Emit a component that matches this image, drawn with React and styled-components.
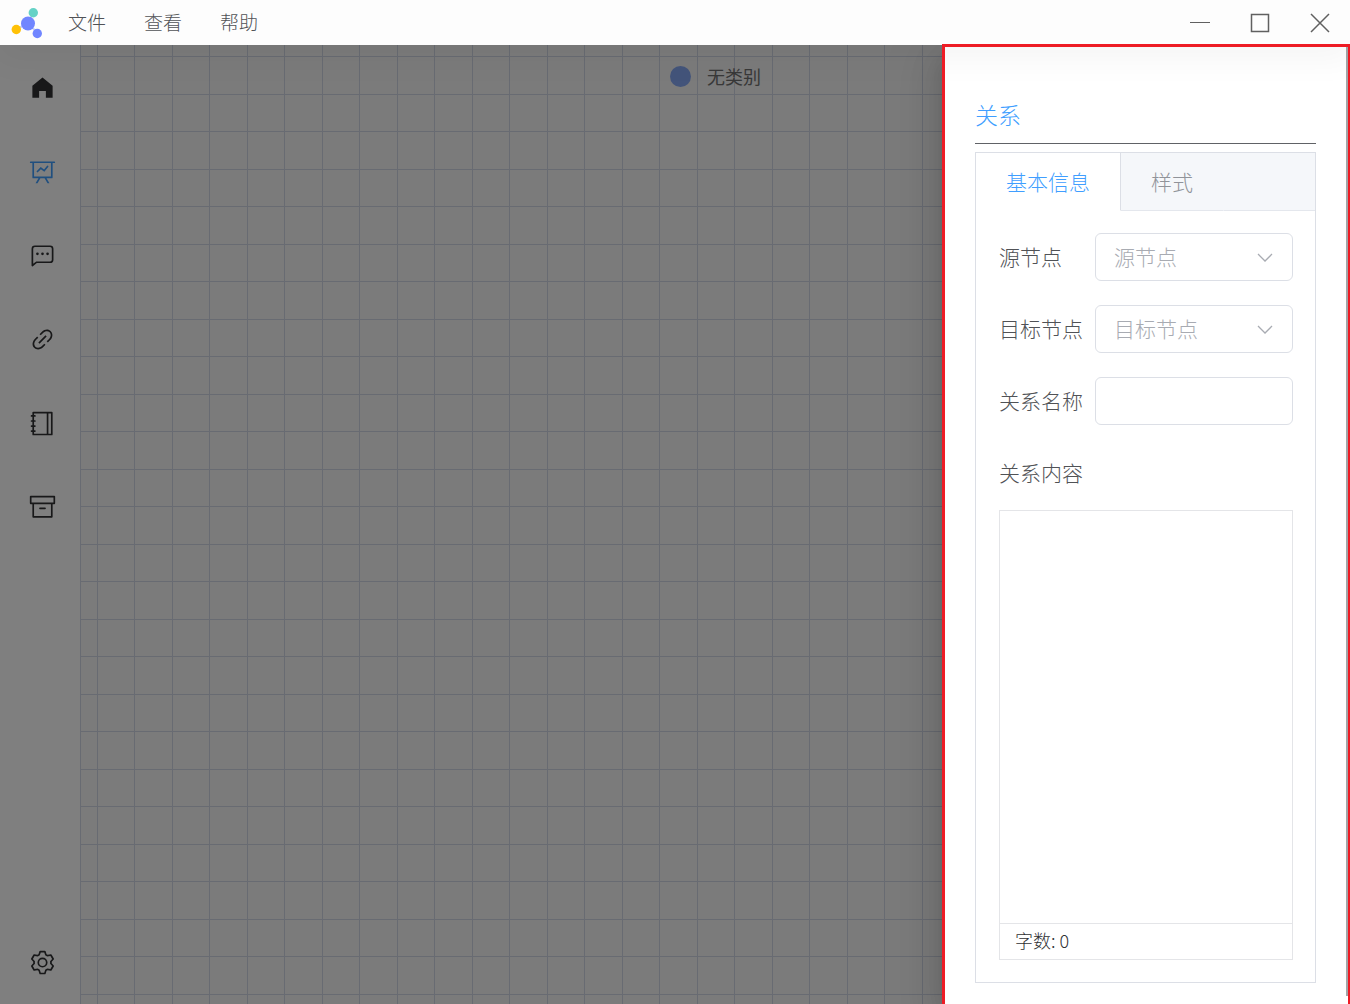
import { useState } from "react";
import styled, { createGlobalStyle } from "styled-components";

const NAV_ICONS = [
  {
    label: "首页",
    d: "M512 128 128 447.936V896h255.936V640H640v256h255.936V447.936z",
  },
  {
    label: "图谱",
    active: true,
    d: "M359.168 768H160a32 32 0 0 1-32-32V192H64a32 32 0 0 1 0-64h896a32 32 0 1 1 0 64h-64v544a32 32 0 0 1-32 32H665.216l110.848 192h-73.856L591.36 768H433.024L322.176 960H248.32l110.848-192zM832 192H192v512h640V192zM342.656 534.656a32 32 0 1 1-45.312-45.312L444.992 341.76l125.44 94.08L679.04 300.032a32 32 0 1 1 49.92 39.936L581.632 524.224 451.008 426.24 342.656 534.592z",
  },
  {
    label: "对话",
    d: "M273.536 736H800a64 64 0 0 0 64-64V256a64 64 0 0 0-64-64H224a64 64 0 0 0-64 64v570.88L273.536 736zM296 800 147.968 918.4A32 32 0 0 1 96 893.44V256a128 128 0 0 1 128-128h576a128 128 0 0 1 128 128v416a128 128 0 0 1-128 128H296zM512 499.2a51.2 51.2 0 1 1 0-102.4 51.2 51.2 0 0 1 0 102.4zm192 0a51.2 51.2 0 1 1 0-102.4 51.2 51.2 0 0 1 0 102.4zm-384 0a51.2 51.2 0 1 1 0-102.4 51.2 51.2 0 0 1 0 102.4z",
  },
  {
    label: "链接",
    d: "M715.648 625.152 670.4 579.904l90.496-90.56c75.008-74.944 85.12-186.368 22.656-248.896-62.528-62.464-173.952-52.352-248.96 22.656L444.16 353.6l-45.248-45.248 90.496-90.496c100.032-99.968 251.968-110.08 339.456-22.656 87.488 87.488 77.312 239.424-22.656 339.456l-90.496 90.496zm-90.496 90.496-90.496 90.496C434.624 906.112 282.688 916.224 195.2 828.8c-87.488-87.488-77.312-239.424 22.656-339.456l90.496-90.496 45.248 45.248-90.496 90.56c-75.008 74.944-85.12 186.368-22.656 248.896 62.528 62.464 173.952 52.352 248.96-22.656l90.496-90.496zm0-362.048 45.248 45.248L398.848 670.4 353.6 625.152 625.152 353.6z",
  },
  {
    label: "笔记",
    d: "M192 128v768h640V128H192zm-32-64h704a32 32 0 0 1 32 32v832a32 32 0 0 1-32 32H160a32 32 0 0 1-32-32V96a32 32 0 0 1 32-32zM672 128h64v768h-64zM96 192h128q32 0 32 32t-32 32H96q-32 0-32-32t32-32zm0 192h128q32 0 32 32t-32 32H96q-32 0-32-32t32-32zm0 192h128q32 0 32 32t-32 32H96q-32 0-32-32t32-32zm0 192h128q32 0 32 32t-32 32H96q-32 0-32-32t32-32z",
  },
  {
    label: "归档",
    d: "M832 384H192v448h640V384zM96 320h832V128H96v192zm800 64v480a32 32 0 0 1-32 32H160a32 32 0 0 1-32-32V384H64a32 32 0 0 1-32-32V96a32 32 0 0 1 32-32h896a32 32 0 0 1 32 32v256a32 32 0 0 1-32 32h-64zM416 512h192a32 32 0 0 1 0 64H416a32 32 0 0 1 0-64z",
  },
];

const SETTING_ICON =
  "M600.704 64a32 32 0 0 1 30.464 22.208l35.2 109.376c14.784 7.232 28.928 15.36 42.432 24.512l112.384-24.192a32 32 0 0 1 34.432 15.36L944.32 364.8a32 32 0 0 1-4.032 37.504l-77.12 85.12a357.12 357.12 0 0 1 0 49.024l77.12 85.248a32 32 0 0 1 4.032 37.504l-88.704 153.6a32 32 0 0 1-34.432 15.296L708.8 803.904c-13.44 9.088-27.648 17.28-42.368 24.512l-35.264 109.376A32 32 0 0 1 600.704 960H423.296a32 32 0 0 1-30.464-22.208L357.696 828.48a351.616 351.616 0 0 1-42.56-24.64l-112.32 24.256a32 32 0 0 1-34.432-15.36L79.68 659.2a32 32 0 0 1 4.032-37.504l77.12-85.248a357.12 357.12 0 0 1 0-48.896l-77.12-85.248A32 32 0 0 1 79.68 364.8l88.704-153.6a32 32 0 0 1 34.432-15.296l112.32 24.256c13.568-9.152 27.776-17.408 42.56-24.64l35.2-109.312A32 32 0 0 1 423.232 64H600.64zm-23.424 64H446.72l-36.352 113.088-24.512 11.968a294.113 294.113 0 0 0-34.816 20.096l-22.656 15.36-116.224-25.088-65.28 113.152 79.68 88.192-1.92 27.136a293.12 293.12 0 0 0 0 40.192l1.92 27.136-79.808 88.192 65.344 113.152 116.224-25.024 22.656 15.296a294.113 294.113 0 0 0 34.816 20.096l24.512 11.968L446.72 896h130.688l36.48-113.152 24.448-11.904a288.282 288.282 0 0 0 34.752-20.096l22.592-15.296 116.288 25.024 65.28-113.152-79.744-88.192 1.92-27.136a293.12 293.12 0 0 0 0-40.256l-1.92-27.136 79.808-88.128-65.344-113.152-116.288 24.96-22.592-15.232a287.616 287.616 0 0 0-34.752-20.096l-24.448-11.904L577.344 128zM512 320a192 192 0 1 1 0 384 192 192 0 0 1 0-384zm0 64a128 128 0 1 0 0 256 128 128 0 0 0 0-256z";

const Icon = ({ d }) => (
  <svg width="27" height="27" viewBox="0 0 1024 1024" aria-hidden="true">
    <path fill="currentColor" d={d} />
  </svg>
);

const Logo = () => (
  <svg width="32" height="32" viewBox="0 0 32 32" aria-hidden="true">
    <path d="M17 17 22 6M17 17 5 22M17 17l10 9" stroke="#c5cdf8" strokeWidth="2" />
    <circle cx="17" cy="16.5" r="7" fill="#7186ff" />
    <circle cx="22.3" cy="5.7" r="4.7" fill="#65d2c6" />
    <circle cx="5.3" cy="22.5" r="4.7" fill="#ffc107" />
    <circle cx="26.3" cy="26.5" r="4.7" fill="#7186ff" />
  </svg>
);

const SelectField = ({ id, label }) => (
  <Field>
    <Label htmlFor={id}>{label}</Label>
    <SelectWrap>
      <Select id={id} defaultValue="">
        <option value="">{label}</option>
      </Select>
      <Chevron viewBox="0 0 18 18" aria-hidden="true">
        <path d="m2 6 7 7 7-7" fill="none" stroke="#a8abb2" strokeWidth="1.3" />
      </Chevron>
    </SelectWrap>
  </Field>
);

const App = () => {
  const [content, setContent] = useState("");
  const [tab, setTab] = useState("info");

  return (
    <Page>
      <GlobalStyle />
      <TitleBar>
        <Logo />
        <Menu>
          <MenuItem>文件</MenuItem>
          <MenuItem>查看</MenuItem>
          <MenuItem>帮助</MenuItem>
        </Menu>
        <WindowButton aria-label="最小化">
          <svg width="22" height="22" viewBox="0 0 22 22">
            <path d="M1 10.5h20" strokeWidth="1" />
          </svg>
        </WindowButton>
        <WindowButton aria-label="最大化">
          <svg width="22" height="22" viewBox="0 0 22 22">
            <path d="M2.5 2.5h17v17h-17z" strokeWidth="1.5" />
          </svg>
        </WindowButton>
        <WindowButton aria-label="关闭">
          <svg width="22" height="22" viewBox="0 0 22 22">
            <path d="m2 2 18 18M20 2 2 20" strokeWidth="1.5" />
          </svg>
        </WindowButton>
      </TitleBar>

      <Workspace>
        <Sidebar>
          {NAV_ICONS.map((icon) => (
            <NavButton
              key={icon.label}
              aria-label={icon.label}
              $active={icon.active}
            >
              <Icon d={icon.d} />
            </NavButton>
          ))}
          <Spacer />
          <NavButton aria-label="设置">
            <Icon d={SETTING_ICON} />
          </NavButton>
        </Sidebar>
        <Canvas>
          <Legend>
            <Dot />
            无类别
          </Legend>
        </Canvas>

        <Overlay>
          <Drawer>
            <Frame />
            <ScrollThumb />
            <Title>关系</Title>
            <Panel>
              <TabList role="tablist">
                <Tab
                  role="tab"
                  aria-selected={tab === "info"}
                  $active={tab === "info"}
                  onClick={() => setTab("info")}
                >
                  基本信息
                </Tab>
                <Tab
                  role="tab"
                  aria-selected={tab === "style"}
                  $active={tab === "style"}
                  onClick={() => setTab("style")}
                >
                  样式
                </Tab>
                <TabRest />
              </TabList>
              <Form>
                <SelectField id="source" label="源节点" />
                <SelectField id="target" label="目标节点" />
                <Field>
                  <Label htmlFor="name">关系名称</Label>
                  <Input id="name" type="text" />
                </Field>
                <Field>
                  <Label htmlFor="content">关系内容</Label>
                </Field>
                <Editor>
                  <TextArea
                    id="content"
                    value={content}
                    onChange={(e) => setContent(e.target.value)}
                  />
                  <WordCount>字数: {content.length}</WordCount>
                </Editor>
              </Form>
            </Panel>
          </Drawer>
        </Overlay>
      </Workspace>
    </Page>
  );
};

export default App;

const GlobalStyle = createGlobalStyle`
  * {
    box-sizing: border-box;
  }
  body {
    margin: 0;
    color: #505256;
    font-family: "Noto Sans CJK SC", sans-serif;
    font-weight: 300;
  }
  button, input, select, textarea {
    margin: 0;
    padding: 0;
    border: 0;
    background: none;
    color: inherit;
    font: inherit;
  }
`;

const Page = styled.div`
  display: flex;
  flex-direction: column;
  height: 100vh;
  overflow: hidden;
`;
const TitleBar = styled.header`
  position: relative;
  z-index: 1;
  display: flex;
  flex: none;
  align-items: center;
  height: 45px;
  padding-left: 11px;
  background: #fdfdfd;
  box-shadow: 0 12px 32px 4px rgba(0, 0, 0, 0.04);
`;
const Menu = styled.nav`
  display: flex;
  flex: 1;
  gap: 38px;
  margin-left: 25px;
`;
const MenuItem = styled.button`
  padding-bottom: 2px;
  font-size: 19px;
  line-height: 28px;
`;
const WindowButton = styled.button`
  display: flex;
  align-items: center;
  justify-content: center;
  width: 60px;
  height: 45px;

  path {
    fill: none;
    stroke: #606060;
  }
`;
const Workspace = styled.main`
  position: relative;
  display: flex;
  flex: 1;
  min-height: 0;
`;
const Sidebar = styled.nav`
  display: flex;
  flex: none;
  flex-direction: column;
  width: 81px;
  padding-left: 4px;
  border-right: 1px solid #d0d6e4;
  background: #ffffff;
`;
const NavButton = styled.button`
  display: flex;
  flex: none;
  align-items: center;
  justify-content: center;
  height: 84px;
  color: ${(p) => (p.$active ? "#409eff" : "#303133")};
`;
const Spacer = styled.div`
  flex: 1;
`;
/* each tile holds two grid cells in both directions */
const Canvas = styled.section`
  flex: 1;
  background-color: #f6f6f6;
  background-image: linear-gradient(#d0d6e4 1px, transparent 1px),
    linear-gradient(#d0d6e4 1px, transparent 1px),
    linear-gradient(90deg, #d0d6e4 1px, transparent 1px),
    linear-gradient(90deg, #d0d6e4 1px, transparent 1px);
  background-size: 75px 75px;
  background-position: 0 11px, 0 49px, 16px 0, 53px 0;
`;
const Legend = styled.div`
  display: flex;
  align-items: center;
  justify-content: center;
  gap: 16px;
  padding-top: 18px;
  color: #707070;
  font-size: 18px;
  font-weight: 400;
  line-height: 27px;
`;
const Dot = styled.span`
  width: 21px;
  height: 21px;
  border-radius: 50%;
  background: #87a9f5;
`;
const Overlay = styled.div`
  position: absolute;
  inset: 0;
  display: flex;
  justify-content: flex-end;
  background: rgba(0, 0, 0, 0.5);
`;
const Drawer = styled.aside`
  position: relative;
  display: flex;
  flex-direction: column;
  width: 30%;
  min-width: 408px;
  padding: 50px 34px 21px 33px;
  background: #ffffff;
  box-shadow: 0 16px 48px 16px rgba(0, 0, 0, 0.08),
    0 12px 32px rgba(0, 0, 0, 0.12), 0 8px 16px -8px rgba(0, 0, 0, 0.16);
`;
const Frame = styled.div`
  position: absolute;
  z-index: 2;
  inset: -1px 0 0;
  border: solid #ee1c25;
  border-width: 3px 2px 0 3px;
  pointer-events: none;
`;
const ScrollThumb = styled.div`
  position: absolute;
  top: 2px;
  right: 2px;
  bottom: 8px;
  width: 2px;
  background: #a3a5a8;
`;
const Title = styled.h2`
  margin: 0 0 8px;
  padding-bottom: 10px;
  border-bottom: 1px solid #606266;
  color: #409eff;
  font-size: 23px;
  font-weight: 300;
  line-height: 38px;
`;
const Panel = styled.div`
  display: flex;
  flex: 1;
  flex-direction: column;
  border: 1px solid #dcdfe6;
`;
const TabList = styled.div`
  display: flex;
`;
const Tab = styled.button`
  height: 58px;
  padding: 0 30px 2px;
  border-right: 1px solid ${(p) => (p.$active ? "#dcdfe6" : "transparent")};
  border-bottom: 1px solid ${(p) => (p.$active ? "transparent" : "#e4e7ed")};
  background: ${(p) => (p.$active ? "#ffffff" : "#f5f7fa")};
  color: ${(p) => (p.$active ? "#409eff" : "#909399")};
  font-size: 21px;
`;
const TabRest = styled.div`
  flex: 1;
  border-bottom: 1px solid #e4e7ed;
  background: #f5f7fa;
`;
const Form = styled.form`
  display: flex;
  flex: 1;
  flex-direction: column;
  padding: 22px;
`;
const Field = styled.div`
  display: flex;
  flex: none;
  align-items: center;
  height: 48px;
  margin-bottom: 24px;
  font-size: 21px;

  &:nth-of-type(4) {
    margin-bottom: 13px;
  }
`;
const Label = styled.label`
  flex: none;
  width: 97px;
  padding: 0 0 2px 1px;
`;
const SelectWrap = styled.div`
  position: relative;
  flex: 1;
  min-width: 0;
`;
const Input = styled.input`
  flex: 1;
  width: 100%;
  min-width: 0;
  height: 48px;
  padding: 0 18px 2px;
  border: 1px solid #dcdfe6;
  border-radius: 6px;
`;
const Select = styled(Input).attrs({ as: "select" })`
  appearance: none;
  color: #a8abb2;
`;
const Chevron = styled.svg`
  position: absolute;
  top: 15px;
  right: 19px;
  width: 18px;
  height: 18px;
  pointer-events: none;
`;
const Editor = styled.div`
  display: flex;
  flex: 1;
  flex-direction: column;
  margin-left: 1px;
  border: 1px solid #e4e5e8;
`;
const TextArea = styled.textarea`
  flex: 1;
  padding: 15px;
  outline: none;
  font-size: 18px;
  resize: none;
`;
const WordCount = styled.div`
  padding: 0 15px 2px;
  border-top: 1px solid #e4e5e8;
  color: #303133;
  font-size: 18px;
  line-height: 33px;
`;
